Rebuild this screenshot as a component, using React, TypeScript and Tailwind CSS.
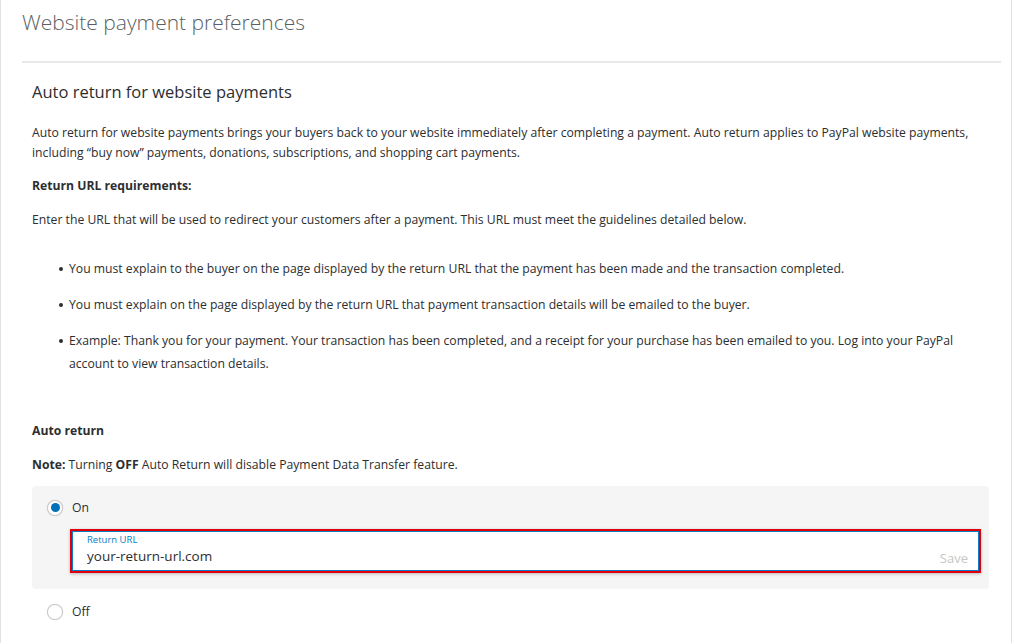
import React from "react";

const bullets = [
  "You must explain to the buyer on the page displayed by the return URL that the payment has been made and the transaction completed.",
  "You must explain on the page displayed by the return URL that payment transaction details will be emailed to the buyer.",
  "Example: Thank you for your payment. Your transaction has been completed, and a receipt for your purchase has been emailed to you. Log into your PayPal account to view transaction details.",
];

const Radio: React.FC<{ checked?: boolean; label: string }> = ({ checked, label }) => (
  <label className="flex items-center gap-[9px] text-[12.2px] text-[#2c2e2f]">
    <span className="flex h-[16px] w-[16px] items-center justify-center rounded-full border border-[#c9c9c9] bg-white shadow-[0_0_1px_rgba(0,0,0,0.2)]">
      {checked && <span className="h-[9px] w-[9px] rounded-full bg-[#0070ba]" />}
    </span>
    {label}
  </label>
);

export default function App() {
  return (
    <div className="h-[643px] w-[1024px] overflow-hidden bg-white font-['Open_Sans',sans-serif]">
      <div className="h-full w-[1012px] border-x border-[#e2e2e2] pl-[21px] pr-[10px]">
        {/* Page title */}
        <h1 className="pt-[7px] text-[21px] font-light text-[#5b5f63]">Website payment preferences</h1>
        <div className="mt-[22px] h-[2px] bg-[#e9e9e9]" />

        <div className="pl-[10px] pr-[20px] text-[12.2px] leading-[20px] text-[#2c2e2f]">
          <h2 className="mt-[19px] text-[16.5px] font-medium text-[#2c2e2f]">Auto return for website payments</h2>

          <p className="mt-[21px]">
            Auto return for website payments brings your buyers back to your website immediately after completing a
            payment. Auto return applies to PayPal website payments, including “buy now” payments, donations,
            subscriptions, and shopping cart payments.
          </p>

          <h3 className="mt-[13px] font-bold">Return URL requirements:</h3>

          <p className="mt-[14px]">
            Enter the URL that will be used to redirect your customers after a payment. This URL must meet the
            guidelines detailed below.
          </p>

          <ul className="mt-[27px] space-y-[13px] pl-[27px]">
            {bullets.map((b, i) => (
              <li key={i} className="flex gap-[6px]">
                <span className="mt-[10px] h-[4px] w-[4px] shrink-0 rounded-full bg-[#2c2e2f]" />
                <span className="leading-[23px]">{b}</span>
              </li>
            ))}
          </ul>

          <h3 className="mt-[46px] font-bold">Auto return</h3>
          <p className="mt-[14px]">
            <span className="font-bold">Note:</span> Turning <span className="font-bold">OFF</span> Auto Return will
            disable Payment Data Transfer feature.
          </p>

          {/* Auto return options */}
          <div className="mt-[11px] mr-[-8px] rounded-[4px] bg-[#f5f5f5] pl-[15px] pr-[8px] pb-[16px] pt-[12px]">
            <Radio checked label="On" />
            <div className="ml-[23px] mt-[11px] border-2 border-[#e0000b] shadow-[0_1px_3px_rgba(0,0,0,0.25)]">
              <div className="relative border border-[#0a7ec2] bg-white px-[14px] pb-[4px] pt-[2px]">
                <div className="text-[9.5px] leading-[12px] text-[#0a7ec2]">Return URL</div>
                <div className="text-[13.5px] leading-[20px] text-[#2c2e2f]">your-return-url.com</div>
                <span className="absolute bottom-[2px] right-[10px] text-[13px] text-[#c6c6c6]">Save</span>
              </div>
            </div>
          </div>

          <div className="mt-[13px] pl-[15px]">
            <Radio label="Off" />
          </div>
        </div>
      </div>
    </div>
  );
}
